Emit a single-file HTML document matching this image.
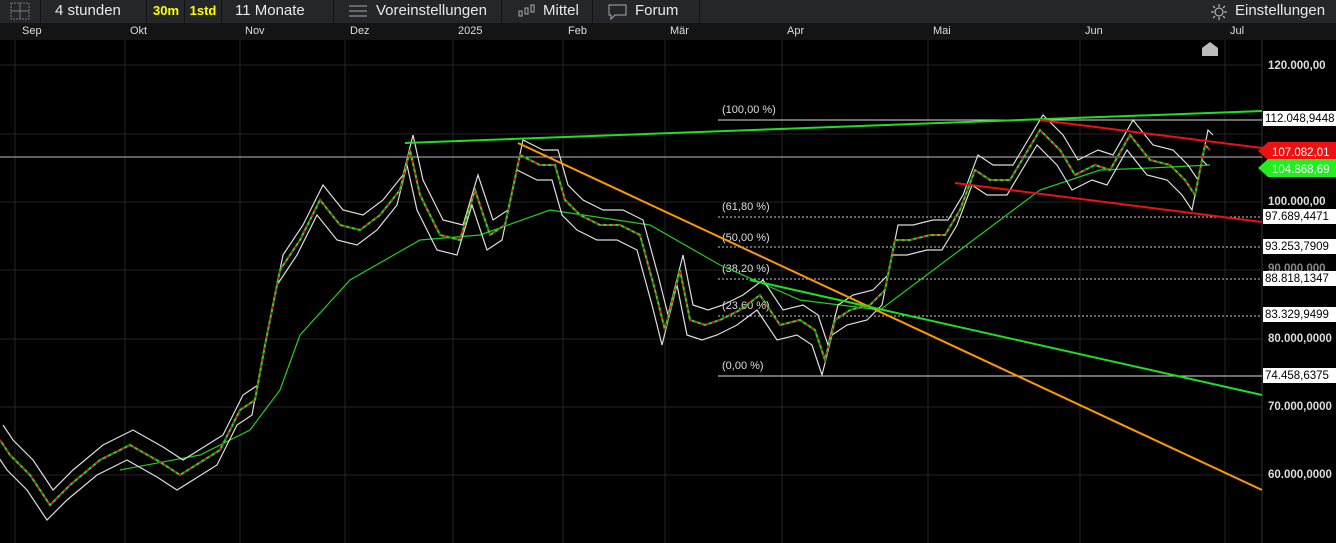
<!DOCTYPE html>
<html><head><meta charset="utf-8"><style>
body{margin:0;width:1336px;height:543px;background:#000;overflow:hidden;font-family:"Liberation Sans",sans-serif}
.tb{position:absolute;left:0;top:0;width:1336px;height:23px;background:#24272a;color:#e8e8e8;font-size:15px}
.tb div{position:absolute;top:0;height:23px;line-height:21px;border-right:1px solid #111}
.ax{position:absolute;left:0;top:23px;width:1336px;height:17px;background:#141414;color:#ddd;font-size:11px}
.ax span{position:absolute;top:2px}
</style></head><body>
<div class="tb">
<div style="left:0;width:40px"><svg width="40" height="22"><rect x="11" y="3" width="18" height="16" fill="none" stroke="#777" stroke-dasharray="2,1"/><line x1="20" y1="3" x2="20" y2="19" stroke="#777"/><line x1="11" y1="11" x2="29" y2="11" stroke="#777"/></svg></div>
<div style="left:41px;width:106px;padding-left:14px;box-sizing:border-box">4 stunden</div>
<div style="left:148px;width:36px;color:#ff0;font-weight:bold;font-size:13px;text-align:center">30m</div>
<div style="left:185px;width:36px;color:#ff0;font-weight:bold;font-size:13px;text-align:center">1std</div>
<div style="left:222px;width:112px;padding-left:13px;box-sizing:border-box">11 Monate</div>
<div style="left:335px;width:167px;padding-left:41px;box-sizing:border-box"><svg style="position:absolute;left:14px;top:4px" width="18" height="15" stroke="#aaa"><line x1="0" y1="2" x2="18" y2="2"/><line x1="0" y1="7" x2="18" y2="7"/><line x1="0" y1="12" x2="18" y2="12"/></svg>Voreinstellungen</div>
<div style="left:503px;width:90px;padding-left:40px;box-sizing:border-box"><svg style="position:absolute;left:14px;top:3px" width="20" height="16" stroke="#aaa" fill="none"><rect x="2" y="8" width="3" height="5"/><rect x="8" y="5" width="3" height="6"/><rect x="14" y="2" width="3" height="7"/></svg>Mittel</div>
<div style="left:594px;width:106px;padding-left:41px;box-sizing:border-box"><svg style="position:absolute;left:14px;top:4px" width="20" height="16" stroke="#aaa" fill="none"><path d="M1 1H18V11H7L3 15V11H1Z"/></svg>Forum</div>
<div style="left:1205px;width:131px;border:none;padding-left:30px;box-sizing:border-box"><svg style="position:absolute;left:5px;top:3px" width="18" height="17" stroke="#ccc" fill="none"><circle cx="9" cy="9" r="4"/><path d="M9 1v3M9 14v3M1 9h3M14 9h3M3 3l2 2M13 13l2 2M3 15l2-2M13 5l2-2"/></svg>Einstellungen</div>
</div>
<div class="ax">
<span style="left:22px">Sep</span><span style="left:130px">Okt</span><span style="left:245px">Nov</span><span style="left:350px">Dez</span><span style="left:458px">2025</span><span style="left:568px">Feb</span><span style="left:670px">Mär</span><span style="left:787px">Apr</span><span style="left:933px">Mai</span><span style="left:1085px">Jun</span><span style="left:1230px">Jul</span>
</div>
<svg style="position:absolute;left:0;top:40px" width="1336" height="503" viewBox="0 40 1336 503" font-family="Liberation Sans" font-size="11">
<g stroke="#242424">
<line x1="15" y1="40" x2="15" y2="543"/><line x1="125" y1="40" x2="125" y2="543"/><line x1="240" y1="40" x2="240" y2="543"/><line x1="345" y1="40" x2="345" y2="543"/><line x1="453" y1="40" x2="453" y2="543"/><line x1="563" y1="40" x2="563" y2="543"/><line x1="665" y1="40" x2="665" y2="543"/><line x1="782" y1="40" x2="782" y2="543"/><line x1="928" y1="40" x2="928" y2="543"/><line x1="1080" y1="40" x2="1080" y2="543"/><line x1="1225" y1="40" x2="1225" y2="543"/>
<line x1="0" y1="65" x2="1262" y2="65"/><line x1="0" y1="134" x2="1262" y2="134"/><line x1="0" y1="202" x2="1262" y2="202"/><line x1="0" y1="270" x2="1262" y2="270"/><line x1="0" y1="339" x2="1262" y2="339"/><line x1="0" y1="407" x2="1262" y2="407"/><line x1="0" y1="475" x2="1262" y2="475"/>
</g>
<line x1="1262" y1="40" x2="1262" y2="543" stroke="#333"/>
<line x1="0" y1="157" x2="1262" y2="157" stroke="#bbb"/>
<line x1="718" y1="120" x2="1262" y2="120" stroke="#ddd"/>
<line x1="718" y1="376" x2="1262" y2="376" stroke="#ddd"/>
<g stroke="#ccc" stroke-dasharray="2,2"><line x1="718" y1="217" x2="1262" y2="217"/><line x1="718" y1="247" x2="1262" y2="247"/><line x1="718" y1="279" x2="1262" y2="279"/><line x1="718" y1="316" x2="1262" y2="316"/></g>
<g fill="#ddd"><text x="722" y="113">(100,00 %)</text><text x="722" y="210">(61,80 %)</text><text x="722" y="241">(50,00 %)</text><text x="722" y="272">(38,20 %)</text><text x="722" y="309">(23,60 %)</text><text x="722" y="369">(0,00 %)</text></g>
<polyline fill="none" stroke="#2c2" stroke-width="1.2" points="120,470 200,455 250,430 280,390 300,335 350,280 420,240 480,235 550,210 650,225 720,265 800,300 880,310 960,250 1040,190 1100,170 1150,168 1210,165"/>
<g fill="none" stroke="#ddd" stroke-width="1.2">
<polyline transform="translate(3,-15)" points="0,440 10,455 30,475 50,505 70,485 100,460 130,445 160,462 180,475 220,450 240,410 255,400 265,345 280,270 300,240 320,200 340,225 360,230 380,215 400,190 410,150 420,195 440,235 460,240 475,190 490,235 505,225 520,155 540,165 555,165 565,200 580,215 600,225 620,225 640,235 655,290 665,330 680,270 690,320 705,325 720,320 740,310 760,295 780,325 800,320 815,330 825,360 835,320 850,310 870,305 885,290 895,240 910,240 930,235 945,235 960,210 975,170 990,180 1010,180 1025,155 1040,130 1060,150 1075,175 1095,165 1110,170 1130,135 1150,160 1170,165 1185,180 1195,195 1205,145 1210,150"/>
<polyline transform="translate(-3,15)" points="0,440 10,455 30,475 50,505 70,485 100,460 130,445 160,462 180,475 220,450 240,410 255,400 265,345 280,270 300,240 320,200 340,225 360,230 380,215 400,190 410,150 420,195 440,235 460,240 475,190 490,235 505,225 520,155 540,165 555,165 565,200 580,215 600,225 620,225 640,235 655,290 665,330 680,270 690,320 705,325 720,320 740,310 760,295 780,325 800,320 815,330 825,360 835,320 850,310 870,305 885,290 895,240 910,240 930,235 945,235 960,210 975,170 990,180 1010,180 1025,155 1040,130 1060,150 1075,175 1095,165 1110,170 1130,135 1150,160 1170,165 1185,180 1195,195 1205,145 1210,150"/>
</g>
<polyline fill="none" stroke="#2d2" stroke-width="2" points="0,440 10,455 30,475 50,505 70,485 100,460 130,445 160,462 180,475 220,450 240,410 255,400 265,345 280,270 300,240 320,200 340,225 360,230 380,215 400,190 410,150 420,195 440,235 460,240 475,190 490,235 505,225 520,155 540,165 555,165 565,200 580,215 600,225 620,225 640,235 655,290 665,330 680,270 690,320 705,325 720,320 740,310 760,295 780,325 800,320 815,330 825,360 835,320 850,310 870,305 885,290 895,240 910,240 930,235 945,235 960,210 975,170 990,180 1010,180 1025,155 1040,130 1060,150 1075,175 1095,165 1110,170 1130,135 1150,160 1170,165 1185,180 1195,195 1205,145 1210,150"/>
<polyline fill="none" stroke="#d11" stroke-width="1.5" stroke-dasharray="3,3" points="0,440 10,455 30,475 50,505 70,485 100,460 130,445 160,462 180,475 220,450 240,410 255,400 265,345 280,270 300,240 320,200 340,225 360,230 380,215 400,190 410,150 420,195 440,235 460,240 475,190 490,235 505,225 520,155 540,165 555,165 565,200 580,215 600,225 620,225 640,235 655,290 665,330 680,270 690,320 705,325 720,320 740,310 760,295 780,325 800,320 815,330 825,360 835,320 850,310 870,305 885,290 895,240 910,240 930,235 945,235 960,210 975,170 990,180 1010,180 1025,155 1040,130 1060,150 1075,175 1095,165 1110,170 1130,135 1150,160 1170,165 1185,180 1195,195 1205,145 1210,150"/>
<line x1="405" y1="143" x2="1262" y2="111" stroke="#2d2" stroke-width="2"/>
<line x1="518" y1="143" x2="1262" y2="490" stroke="#f90" stroke-width="2"/>
<line x1="750" y1="280" x2="1262" y2="395" stroke="#2d2" stroke-width="2"/>
<line x1="1040" y1="120" x2="1262" y2="148" stroke="#e11" stroke-width="2"/>
<line x1="955" y1="183" x2="1262" y2="222" stroke="#e11" stroke-width="2"/>
<path d="M1202 56V48L1210 42L1218 48V56Z" fill="#bbb"/>
<g fill="#ddd" font-weight="bold" font-size="11.5">
<text x="1268" y="69">120.000,00</text><text x="1268" y="205">100.000,00</text><text x="1268" y="272" fill="#888">90.000,000</text><text x="1268" y="342">80.000,0000</text><text x="1268" y="410">70.000,0000</text><text x="1268" y="478">60.000,0000</text>
</g>
<g font-size="11.5">
<rect x="1263" y="111" width="73" height="15" fill="#fff"/><text x="1265" y="122" fill="#000">112.048,9448</text>
<rect x="1263" y="209" width="73" height="15" fill="#fff"/><text x="1265" y="220" fill="#000">97.689,4471</text>
<rect x="1263" y="239" width="73" height="15" fill="#fff"/><text x="1265" y="250" fill="#000">93.253,7909</text>
<rect x="1263" y="271" width="73" height="15" fill="#fff"/><text x="1265" y="282" fill="#000">88.818,1347</text>
<rect x="1263" y="307" width="73" height="15" fill="#fff"/><text x="1265" y="318" fill="#000">83.329,9499</text>
<rect x="1263" y="368" width="73" height="15" fill="#fff"/><text x="1265" y="379" fill="#000">74.458,6375</text>
<path d="M1258 151L1268 142H1336V160H1268Z" fill="#e11"/><text x="1272" y="156" fill="#fff">107.082,01</text>
<path d="M1258 168L1268 159H1336V177H1268Z" fill="#2e2"/><text x="1272" y="173" fill="#fff">104.868,69</text>
</g>
</svg>
</body></html>
